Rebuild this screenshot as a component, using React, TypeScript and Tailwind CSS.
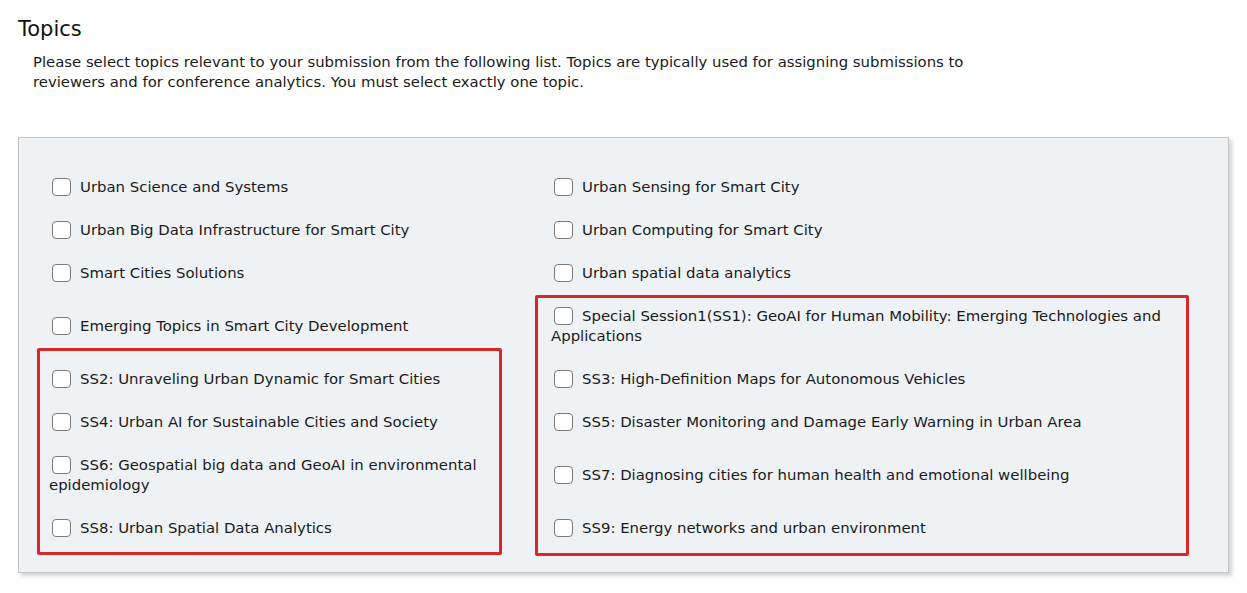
import React from "react";

const left: string[] = [
  "Urban Science and Systems",
  "Urban Big Data Infrastructure for Smart City",
  "Smart Cities Solutions",
  "Emerging Topics in Smart City Development",
  "SS2: Unraveling Urban Dynamic for Smart Cities",
  "SS4: Urban AI for Sustainable Cities and Society",
  "SS6: Geospatial big data and GeoAI in environmental epidemiology",
  "SS8: Urban Spatial Data Analytics",
];

const right: string[] = [
  "Urban Sensing for Smart City",
  "Urban Computing for Smart City",
  "Urban spatial data analytics",
  "Special Session1(SS1): GeoAI for Human Mobility: Emerging Technologies and Applications",
  "SS3: High-Definition Maps for Autonomous Vehicles",
  "SS5: Disaster Monitoring and Damage Early Warning in Urban Area",
  "SS7: Diagnosing cities for human health and emotional wellbeing",
  "SS9: Energy networks and urban environment",
];

function Item({ text }: { text: string }) {
  return (
    <label className="block leading-[20px]">
      <span className="inline-block w-[19px] h-[18px] ml-[3px] mr-[9px] align-[-4px] rounded-[4px] border border-[#7a7a7a] bg-white"></span>
      {text}
    </label>
  );
}

export default function App() {
  const rows = left.map((l, i) => [l, right[i]]);
  return (
    <div
      className="bg-white min-h-[593px] w-[1247px] text-[#1a1a1a] pt-[17px]"
      style={{ fontFamily: '"DejaVu Sans", Verdana, sans-serif' }}
    >
      <h2 className="ml-[18px] text-[21px] leading-[25px] font-normal text-[#111]">Topics</h2>
      <p className="ml-[33px] mt-[10px] w-[960px] text-[14.85px] leading-[20px]">
        Please select topics relevant to your submission from the following list. Topics are typically used for assigning submissions to reviewers and for conference analytics. You must select exactly one topic.
      </p>
      <div className="relative ml-[18px] mt-[45px] w-[1211px] border border-[#c4c4c4] bg-[#eff2f5] shadow-[3px_3px_4px_rgba(0,0,0,0.18)] pt-[27px] pb-[23px] pl-[30px] pr-[40px]">
        <div className="grid grid-cols-[502px_1fr] text-[14.9px]">
          {rows.map(([l, r], i) => {
            const tall = i === 3 || i === 6;
            return (
              <React.Fragment key={i}>
                <div className={`flex items-center ${tall ? "h-[63px]" : "h-[43px]"}`}>
                  <div className="pr-[18px]"><Item text={l} /></div>
                </div>
                <div className={`flex items-center ${tall ? "h-[63px]" : "h-[43px]"}`}>
                  <div><Item text={r} /></div>
                </div>
              </React.Fragment>
            );
          })}
        </div>
        <div className="absolute left-[18px] top-[210px] w-[465px] h-[207px] border-[3.5px] border-[#d62828] rounded-[2px] pointer-events-none"></div>
        <div className="absolute left-[516px] top-[157px] w-[654px] h-[261px] border-[3.5px] border-[#d62828] rounded-[2px] pointer-events-none"></div>
      </div>
    </div>
  );
}
